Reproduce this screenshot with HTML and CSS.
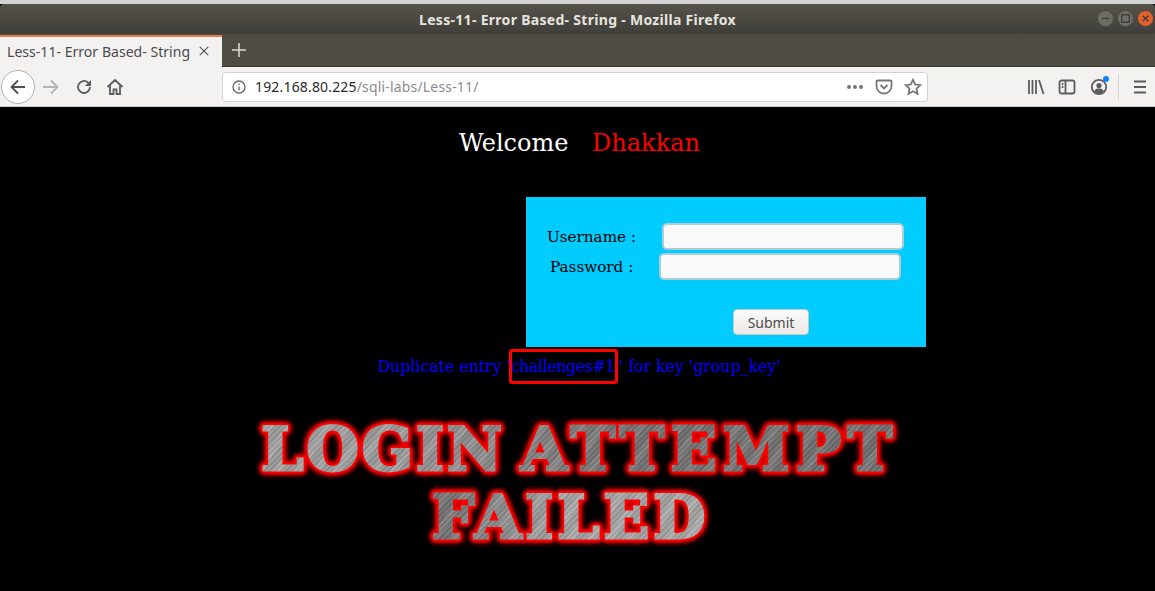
FILE: index.html
```html
<!DOCTYPE html>
<html lang="en">
<head>
<meta charset="utf-8">
<title>Less-11- Error Based- String</title>
<link rel="stylesheet" href="styles.css">
</head>
<body>
<div class="desk-strip"></div>
<header class="titlebar">
  <span class="window-title">Less-11- Error Based- String - Mozilla Firefox</span>
  <div class="window-buttons">
    <span class="wbtn"><svg viewBox="0 0 16 16"><path d="M4 8h8" /></svg></span>
    <span class="wbtn"><svg viewBox="0 0 16 16"><rect x="4" y="4" width="8" height="8" /></svg></span>
    <span class="wbtn wclose"><svg viewBox="0 0 16 16"><path d="M5 5l6 6M11 5l-6 6" /></svg></span>
  </div>
</header>
<div class="tabbar">
  <div class="tab">
    <span class="tab-title">Less-11- Error Based- String</span>
    <svg class="tab-x" viewBox="0 0 12 12"><path d="M1 1l10 10M11 1L1 11" /></svg>
  </div>
  <svg class="newtab" viewBox="0 0 14 14"><path d="M7 0v14M0 7h14" /></svg>
</div>
<nav class="navbar">
  <span class="back"><svg viewBox="0 0 18 18"><path d="M16 9H2.500M9 2.500L2.500 9 9 15.500" /></svg></span>
  <svg class="ico fwd" viewBox="0 0 18 18"><path d="M1 9h14M9 2.500L15.500 9 9 15.500" /></svg>
  <svg class="ico reload" viewBox="0 0 18 18"><path d="M15 9a6 6 0 1 1-2-4.500L15.500 6.500" /><path class="fill" d="M16 2v6h-6z" /></svg>
  <svg class="ico home" viewBox="0 0 18 18"><path d="M1.500 9L9 2l7.500 7M4 7.500V16h3.500v-4.500h3V16H14V7.500" /></svg>
  <div class="urlbar">
    <svg class="info" viewBox="0 0 14 14"><circle cx="7" cy="7" r="6" /><path d="M7 6.500v4M7 3.500v1.500" /></svg>
    <span class="url"><span class="host">192.168.80.225</span>/sqli-labs/Less-11/</span>
    <span class="dots"><i></i><i></i><i></i></span>
    <svg class="ico pocket" viewBox="0 0 18 18"><path d="M2.500 2.500h13a1 1 0 0 1 1 1V8a7.500 7.500 0 0 1-15 0V3.500a1 1 0 0 1 1-1z" /><path d="M5.500 7L9 10.500 12.500 7" /></svg>
    <svg class="ico star" viewBox="0 0 18 18"><path d="M9 1.800l2.200 4.700 5.100.6-3.800 3.500 1 5.100L9 13.200l-4.500 2.500 1-5.100-3.800-3.500 5.100-.6z" /></svg>
  </div>
  <div class="tools">
    <svg class="ico library" viewBox="0 0 18 18"><path d="M2 2v14M5.500 2v14M9 2v14M12 2l4.500 14" /></svg>
    <svg class="ico sidebar" viewBox="0 0 18 18"><rect x="1.500" y="2.500" width="15" height="13" rx="2" /><path d="M7.500 2.500v13M3.800 6h1.600M3.800 9h1.600" /></svg>
    <span class="account">
      <svg class="ico" viewBox="0 0 18 18"><circle cx="9" cy="9" r="7.200" /><circle class="fill" cx="9" cy="7.500" r="2.600" /><path class="fill" d="M4 13.500c1-2.500 3-3 5-3s4 .5 5 3a6.500 6.500 0 0 1-10 0z" /></svg>
      <i class="badge"></i>
    </span>
    <span class="divider"></span>
    <svg class="ico menu" viewBox="0 0 18 18"><path d="M3 3.500h12M3 9h12M3 14.500h12" /></svg>
  </div>
</nav>
<main class="page">
  <h1 class="welcome">Welcome <span class="name">Dhakkan</span></h1>
  <form class="login">
    <div class="row row-user">
      <label class="lbl lbl-user">Username :</label>
      <input class="field" type="text">
    </div>
    <div class="row row-pass">
      <label class="lbl lbl-pass">Password :</label>
      <input class="field" type="text">
    </div>
    <div class="row-submit"><button class="submit" type="button">Submit</button></div>
  </form>
  <p class="error">Duplicate entry '<span class="hit">challenges#1</span>' for key 'group_key'</p>
  <div class="failed">
    <div class="failed-line failed-one"><span class="w-login">LOGIN</span> <span class="w-attempt">ATTEMPT</span></div>
    <div class="failed-line failed-two">FAILED</div>
  </div>
</main>
</body>
</html>
```
FILE: styles.css
```css
* { box-sizing: border-box; }
html, body { margin: 0; height: 100%; }
body {
  width: 1155px;
  height: 591px;
  overflow: hidden;
  background: #000;
  font-family: "Open Sans", "Noto Sans", sans-serif;
}
.desk-strip {
  height: 4px;
  background: #d3d3d5;
}
.titlebar {
  height: 30px;
  background: linear-gradient(#56534b, #403e39);
  display: flex;
  align-items: center;
  justify-content: center;
  position: relative;
  border-radius: 4px 4px 0 0;
}
.window-title {
  color: #e6e4df;
  font: 700 14px "Noto Sans", sans-serif;
  letter-spacing: 0.3px;
}
.window-buttons {
  position: absolute;
  right: 1px;
  top: 6px;
  display: flex;
  gap: 3px;
}
.wbtn {
  width: 17px;
  height: 17px;
  border-radius: 50%;
  background: #6f6c65;
  border: 1px solid #4a4843;
  display: flex;
}
.wbtn svg { width: 15px; height: 15px; fill: none; stroke: #3c3b37; stroke-width: 1.400; }
.wclose { background: #e2602e; }
.tabbar {
  height: 33px;
  background: #4f4c44;
  box-shadow: inset 0 -1px #34332f;
  display: flex;
  align-items: flex-end;
}
.tab {
  width: 222px;
  height: 32px;
  background: #f4f2f0;
  border-top: 2px solid #e9784a;
  display: flex;
  align-items: center;
  padding: 0 0 2px 7px;
}
.tab-title {
  width: 191px;
  font: 400 14px "Noto Sans", sans-serif;
  letter-spacing: 0.04px;
  color: #4a4a4f;
  white-space: nowrap;
}
.tab-x { width: 10px; height: 10px; margin-left: 1px; fill: none; stroke: #5a5a5e; stroke-width: 1.500; }
.newtab { width: 14px; height: 14px; margin: 0 0 10px 10px; fill: none; stroke: #d8d6d2; stroke-width: 1.600; }
.navbar {
  height: 40px;
  background: #f4f2f0;
  border-bottom: 1px solid #c9c8c6;
  display: flex;
  align-items: center;
  padding-left: 1px;
}
.back {
  width: 34px;
  height: 34px;
  border-radius: 50%;
  border: 1px solid #b1b1b1;
  background: #fff;
  display: flex;
  align-items: center;
  justify-content: center;
}
.back svg { width: 18px; height: 18px; fill: none; stroke: #4f4f52; stroke-width: 1.800; }
.ico {
  width: 18px;
  height: 18px;
  flex: none;
  fill: none;
  stroke: #5c5c60;
  stroke-width: 1.800;
}
.ico .fill { fill: #5c5c60; stroke: none; }
.fwd { margin-left: 7px; stroke: #b4b4b4; }
.reload { margin-left: 15px; }
.home { margin-left: 13px; }
.urlbar {
  width: 706px;
  height: 30px;
  margin-left: 98px;
  background: #fff;
  border: 1px solid #d2d1cf;
  border-radius: 4px;
  display: flex;
  align-items: center;
  padding-left: 9px;
  position: relative;
}
.info { width: 14px; height: 14px; fill: none; stroke: #66666a; stroke-width: 1.300; flex: none; }
.url {
  margin-left: 9px;
  font: 400 14px "Noto Sans", sans-serif;
  letter-spacing: 0.17px;
  color: #8c8c90;
  white-space: nowrap;
  flex: 1;
}
.host { color: #2a2a2e; }
.dots { display: flex; gap: 2px; margin-left: 2px; }
.dots i { width: 4px; height: 4px; background: #77777b; border-radius: 50%; }
.pocket { margin-left: 12px; stroke: #77777b; }
.star { margin: 0 5px 0 11px; stroke: #77777b; }
.tools {
  flex: 1;
  display: flex;
  align-items: center;
  padding-left: 99px;
}
.library { margin-right: 13px; }
.sidebar { margin-right: 14px; }
.account { position: relative; display: flex; width: 18px; height: 18px; }
.badge {
  position: absolute;
  right: -1px;
  top: -2px;
  width: 6px;
  height: 6px;
  background: #0a84ff;
  border-radius: 50%;
}
.divider { width: 1px; height: 26px; background: #d5d4d2; margin: 0 12px 0 10px; }
.page {
  height: 484px;
  background: #000;
  position: relative;
  overflow: hidden;
  font-family: "DejaVu Serif", serif;
}
.welcome {
  margin: 0;
  padding: 21px 0 0 4px;
  font-size: 24px;
  font-weight: 400;
  line-height: 30px;
  color: #fff;
  text-align: center;
  word-spacing: 16px;
}
.name { color: #f00; }
.login {
  margin: 39px 0 0 526px;
  width: 400px;
  height: 150px;
  background: #00ccff;
  padding-top: 26px;
  font-size: 15.2px;
  color: #000;
}
.row { display: flex; align-items: center; height: 27px; }
.row-user { padding-left: 21px; margin-bottom: 3px; }
.row-pass { padding-left: 24px; }
.lbl { white-space: nowrap; }
.lbl-user { width: 115px; }
.lbl-pass { width: 109px; }
.field {
  width: 242px;
  height: 27px;
  margin: 0;
  background: #f9f9f9;
  border: 2px solid #aecbd6;
  border-radius: 5px;
  padding: 0;
}
.row-submit { padding: 29px 0 0 207px; }
.submit {
  width: 76px;
  height: 26px;
  background: linear-gradient(#fbfbfb, #ece9e6);
  border: 1px solid #c8c6c2;
  border-radius: 4px;
  font: 400 14px "Noto Sans", sans-serif;
  color: #4c4c4c;
  padding: 0;
}
.error {
  margin: 8px 0 0;
  padding-left: 3px;
  text-align: center;
  font-size: 15.77px;
  line-height: 24px;
  color: #0000ff;
}
.hit { position: relative; letter-spacing: -0.4px; margin-right: 4px; }
.hit::after {
  content: "";
  position: absolute;
  left: -2px;
  right: -3px;
  top: -8px;
  bottom: -8px;
  border: 3px solid #f00;
  border-radius: 3px;
}
.failed {
  margin-top: 36px;
  text-align: center;
  font-weight: 700;
  font-size: 60px;
  line-height: 68px;
  word-spacing: -5px;
  filter: drop-shadow(0 0 1px #f00) drop-shadow(0 0 1px #f00) drop-shadow(0 0 1px #f00) drop-shadow(0 0 2px #f00) drop-shadow(0 0 2px #f00);
}
.w-login { letter-spacing: 3px; }
.w-attempt { letter-spacing: 6.500px; }
.failed-line {
  color: transparent;
  -webkit-text-fill-color: transparent;
  -webkit-text-stroke: 3px transparent;
  -webkit-background-clip: text;
  background-clip: text;
  white-space: nowrap;
}
.failed-one {
  padding-left: 5px;
  background-image:
    repeating-linear-gradient(135deg, rgba(255,255,255,.09) 0 1px, rgba(0,0,0,.07) 1px 3px, rgba(255,255,255,.03) 3px 4px),
    repeating-linear-gradient(125deg, rgba(255,255,255,.06) 0 7px, rgba(0,0,0,.06) 7px 16px),
    linear-gradient(90deg, #b0b0b0 0, #a4a4a4 270px, #a0a0a0 390px, #777 620px, #707070 100%);
}
.failed-two {
  padding-right: 14px;
  letter-spacing: 4px;
  background-image:
    repeating-linear-gradient(135deg, rgba(255,255,255,.09) 0 1px, rgba(0,0,0,.07) 1px 3px, rgba(255,255,255,.03) 3px 4px),
    repeating-linear-gradient(125deg, rgba(255,255,255,.06) 0 7px, rgba(0,0,0,.06) 7px 16px),
    linear-gradient(90deg, #777 0, #777 440px, #a8a8a8 560px, #b8b8b8 100%);
}
```
